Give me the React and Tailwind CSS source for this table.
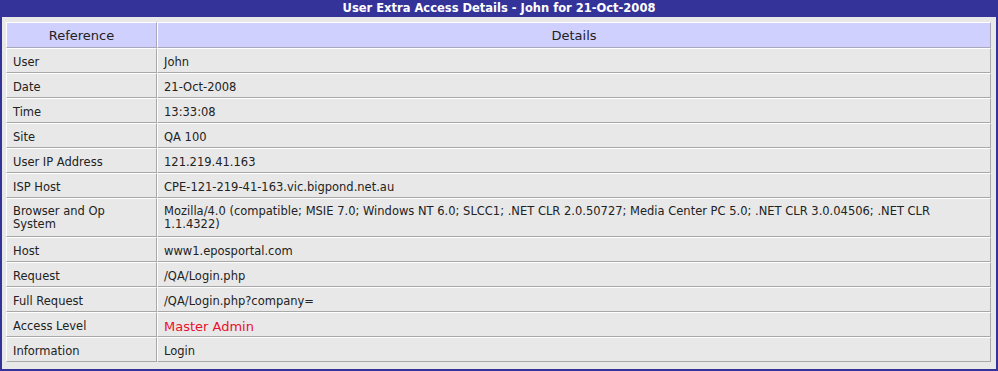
export default function App() {
  const rows = [
    ["User", "John"],
    ["Date", "21-Oct-2008"],
    ["Time", "13:33:08"],
    ["Site", "QA 100"],
    ["User IP Address", "121.219.41.163"],
    ["ISP Host", "CPE-121-219-41-163.vic.bigpond.net.au"],
    ["Browser and Op System", "Mozilla/4.0 (compatible; MSIE 7.0; Windows NT 6.0; SLCC1; .NET CLR 2.0.50727; Media Center PC 5.0; .NET CLR 3.0.04506; .NET CLR 1.1.4322)", false, true],
    ["Host", "www1.eposportal.com"],
    ["Request", "/QA/Login.php"],
    ["Full Request", "/QA/Login.php?company="],
    ["Access Level", "Master Admin", true],
    ["Information", "Login"],
  ];
  const base = "h-[25px] align-middle px-[6px] leading-[13px] border-t border-l border-white border-b border-r border-b-[#a8a8a8] border-r-[#a8a8a8] ";
  return (
    <div className="w-[998px] h-[371px] bg-white" style={{ fontFamily: '"DejaVu Sans", Verdana, sans-serif' }}>
      <div className="w-[998px] border-x-2 border-b-2 border-[#333399] bg-[#e8e8e8]">
        <div className="h-[17px] bg-[#333399] text-white text-[11.5px] font-bold leading-[17px] text-center">
          User Extra Access Details - John for 21-Oct-2008
        </div>
        <div className="px-[4px] pt-[5px] pb-[7px]">
          <table className="w-[985px] border-separate border-spacing-0 text-[11.5px] text-[#222]">
            <colgroup>
              <col className="w-[151px]" />
              <col />
            </colgroup>
            <thead>
              <tr>
                <th className="h-[26px] bg-[#d0d0ff] border-t border-l border-white border-b border-r border-b-[#a8a8b8] border-r-[#a8a8b8] text-[13px] font-normal text-center text-[#222] pt-[2px]">Reference</th>
                <th className="h-[26px] bg-[#d0d0ff] border-t border-l border-white border-b border-r border-b-[#a8a8b8] border-r-[#a8a8b8] text-[13px] font-normal text-center text-[#222] pt-[2px]">Details</th>
              </tr>
            </thead>
            <tbody>
              {rows.map(([k, v, red, tall]) => (
                <tr key={k}>
                  <td className={base + (tall ? "pt-[6px] pb-[5px]" : "pt-[6px] pb-[3px]")}>{k}</td>
                  <td className={base + (tall ? "pt-[6px] pb-[5px] " : "pt-[6px] pb-[3px] ") + (red ? "text-[#e8102a] text-[13px]" : "")}>{v}</td>
                </tr>
              ))}
            </tbody>
          </table>
        </div>
      </div>
    </div>
  );
}
